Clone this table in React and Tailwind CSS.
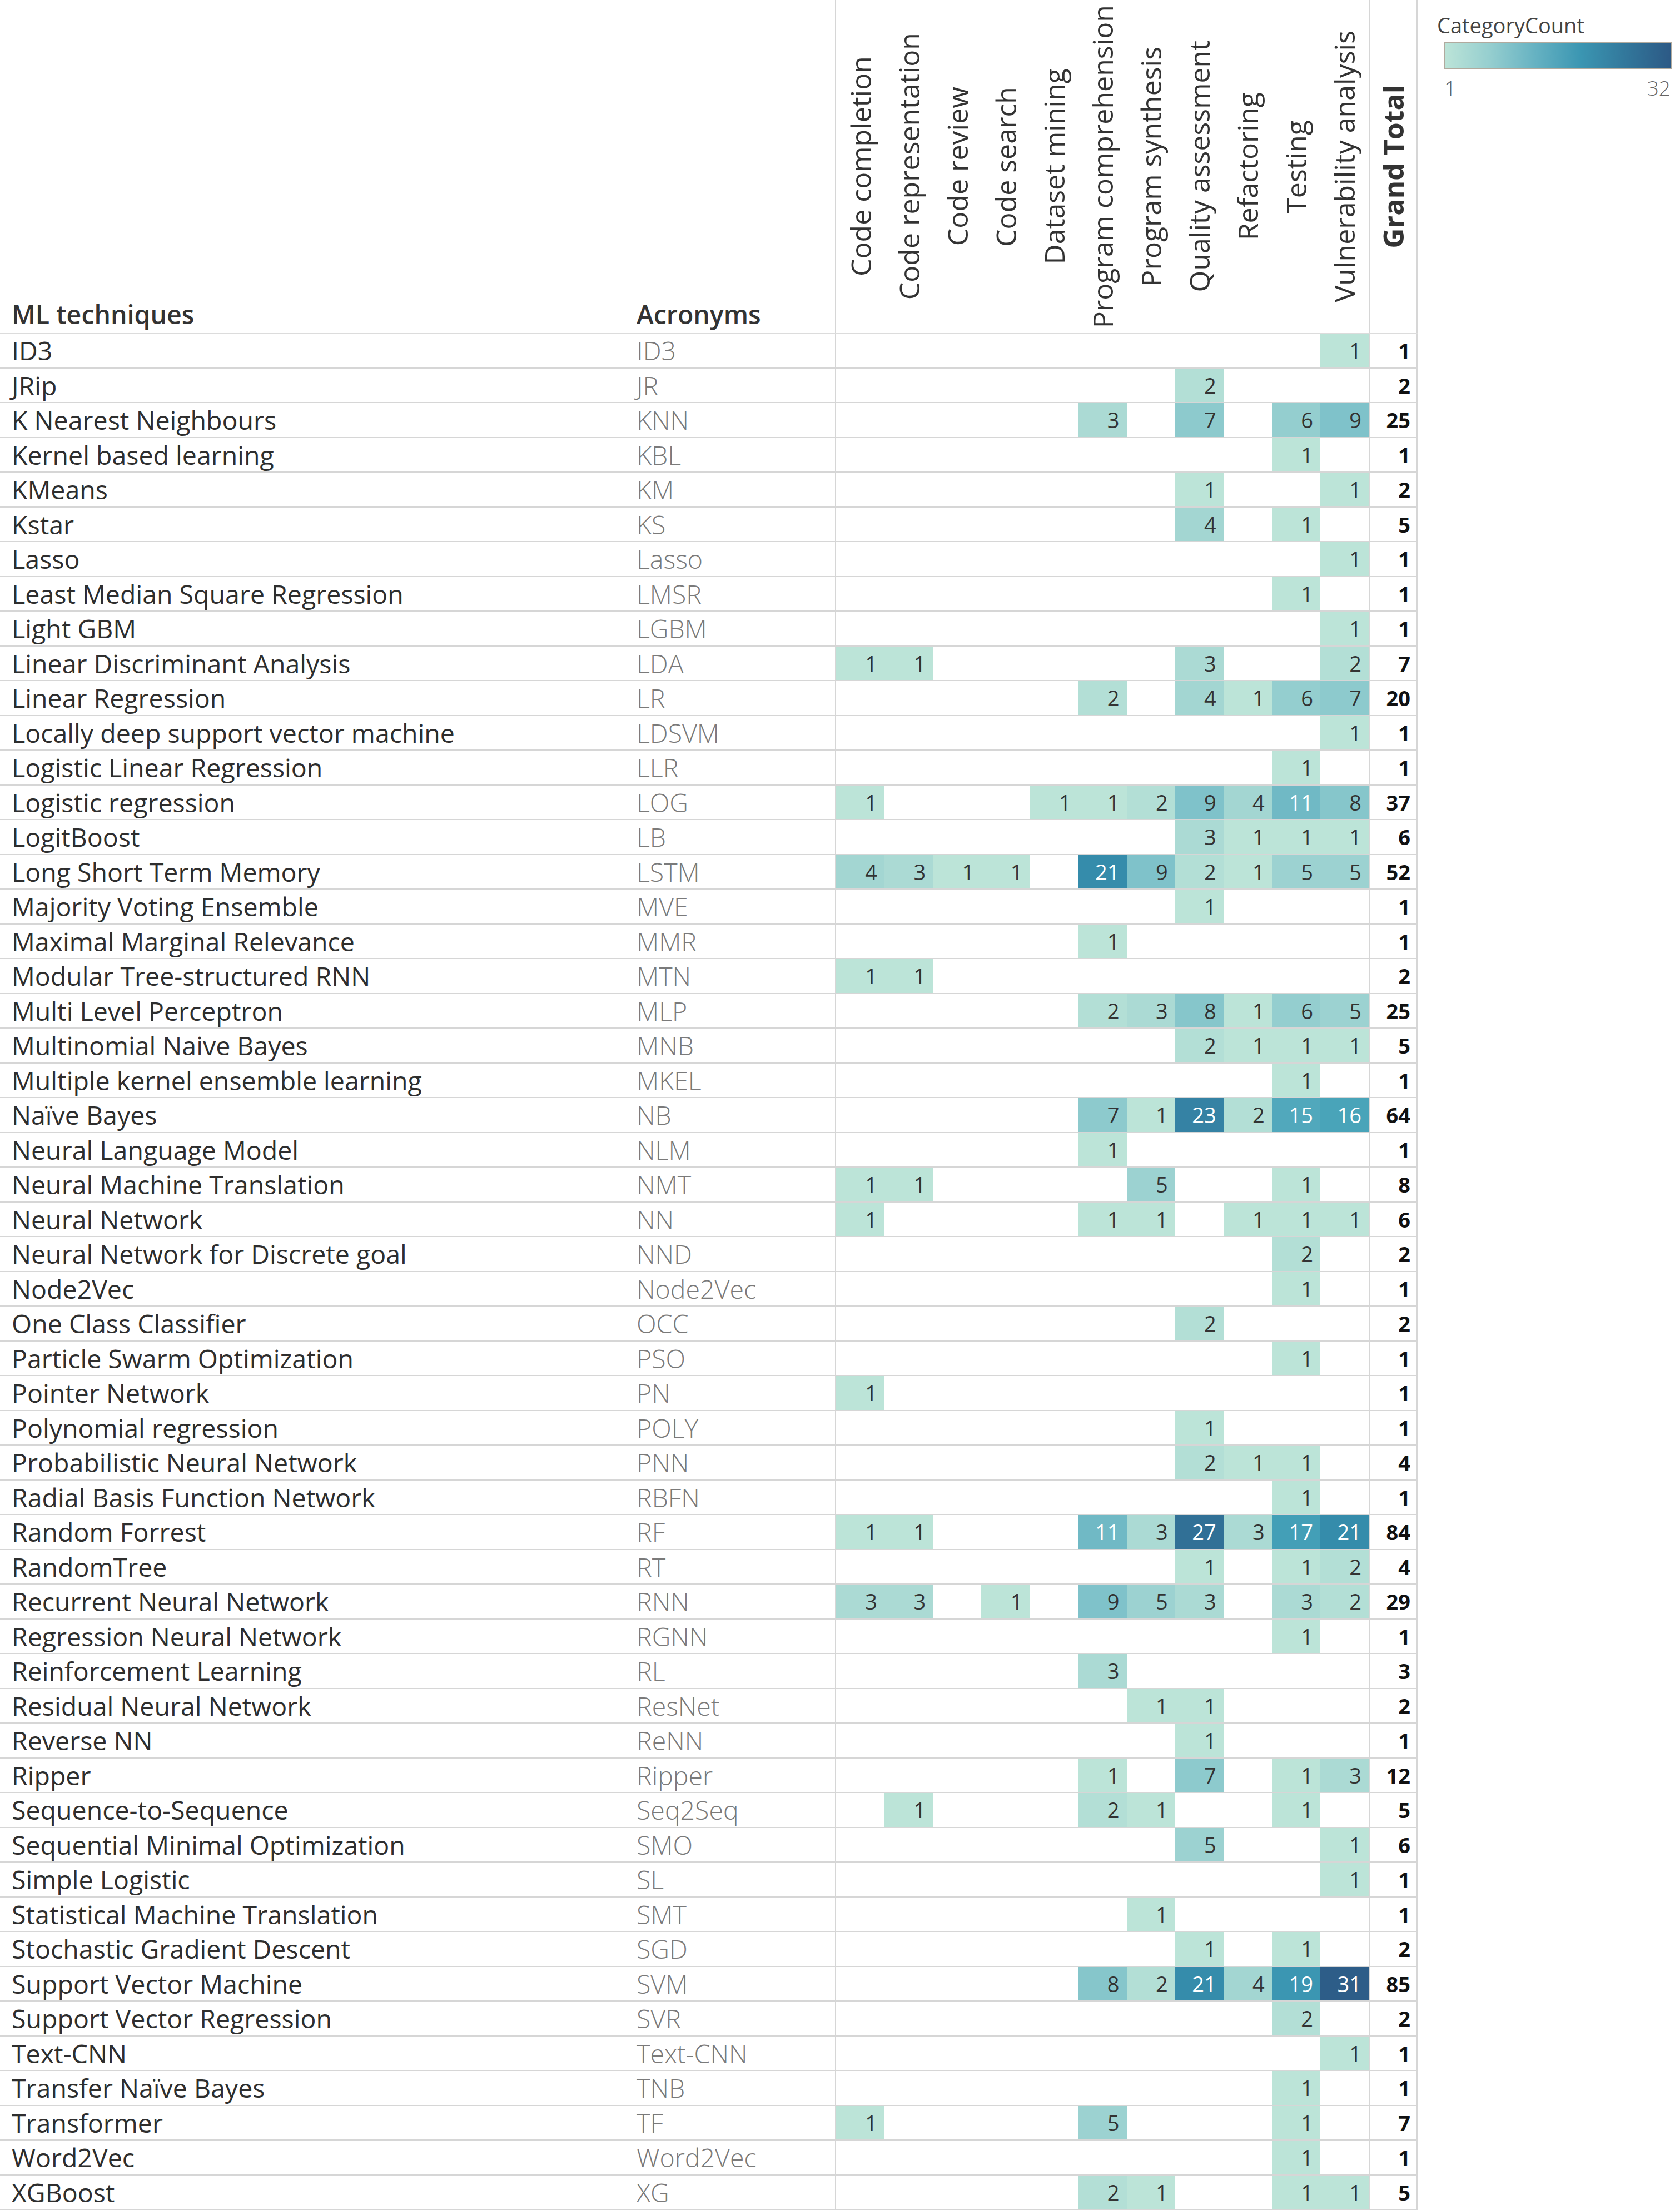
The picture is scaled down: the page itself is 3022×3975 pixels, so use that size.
import React from 'react'

const COLS = [
  'Code completion', 'Code representation', 'Code review', 'Code search', 'Dataset mining',
  'Program comprehension', 'Program synthesis', 'Quality assessment', 'Refactoring', 'Testing',
  'Vulnerability analysis',
]

// values per column: CC CR CRv CS DM PC PS QA RF TS VA
const ROWS = [
  ['ID3', 'ID3', [0, 0, 0, 0, 0, 0, 0, 0, 0, 0, 1]],
  ['JRip', 'JR', [0, 0, 0, 0, 0, 0, 0, 2, 0, 0, 0]],
  ['K Nearest Neighbours', 'KNN', [0, 0, 0, 0, 0, 3, 0, 7, 0, 6, 9]],
  ['Kernel based learning', 'KBL', [0, 0, 0, 0, 0, 0, 0, 0, 0, 1, 0]],
  ['KMeans', 'KM', [0, 0, 0, 0, 0, 0, 0, 1, 0, 0, 1]],
  ['Kstar', 'KS', [0, 0, 0, 0, 0, 0, 0, 4, 0, 1, 0]],
  ['Lasso', 'Lasso', [0, 0, 0, 0, 0, 0, 0, 0, 0, 0, 1]],
  ['Least Median Square Regression', 'LMSR', [0, 0, 0, 0, 0, 0, 0, 0, 0, 1, 0]],
  ['Light GBM', 'LGBM', [0, 0, 0, 0, 0, 0, 0, 0, 0, 0, 1]],
  ['Linear Discriminant Analysis', 'LDA', [1, 1, 0, 0, 0, 0, 0, 3, 0, 0, 2]],
  ['Linear Regression', 'LR', [0, 0, 0, 0, 0, 2, 0, 4, 1, 6, 7]],
  ['Locally deep support vector machine', 'LDSVM', [0, 0, 0, 0, 0, 0, 0, 0, 0, 0, 1]],
  ['Logistic Linear Regression', 'LLR', [0, 0, 0, 0, 0, 0, 0, 0, 0, 1, 0]],
  ['Logistic regression', 'LOG', [1, 0, 0, 0, 1, 1, 2, 9, 4, 11, 8]],
  ['LogitBoost', 'LB', [0, 0, 0, 0, 0, 0, 0, 3, 1, 1, 1]],
  ['Long Short Term Memory', 'LSTM', [4, 3, 1, 1, 0, 21, 9, 2, 1, 5, 5]],
  ['Majority Voting Ensemble', 'MVE', [0, 0, 0, 0, 0, 0, 0, 1, 0, 0, 0]],
  ['Maximal Marginal Relevance', 'MMR', [0, 0, 0, 0, 0, 1, 0, 0, 0, 0, 0]],
  ['Modular Tree-structured RNN', 'MTN', [1, 1, 0, 0, 0, 0, 0, 0, 0, 0, 0]],
  ['Multi Level Perceptron', 'MLP', [0, 0, 0, 0, 0, 2, 3, 8, 1, 6, 5]],
  ['Multinomial Naive Bayes', 'MNB', [0, 0, 0, 0, 0, 0, 0, 2, 1, 1, 1]],
  ['Multiple kernel ensemble learning', 'MKEL', [0, 0, 0, 0, 0, 0, 0, 0, 0, 1, 0]],
  ['Naïve Bayes', 'NB', [0, 0, 0, 0, 0, 7, 1, 23, 2, 15, 16]],
  ['Neural Language Model', 'NLM', [0, 0, 0, 0, 0, 1, 0, 0, 0, 0, 0]],
  ['Neural Machine Translation', 'NMT', [1, 1, 0, 0, 0, 0, 5, 0, 0, 1, 0]],
  ['Neural Network', 'NN', [1, 0, 0, 0, 0, 1, 1, 0, 1, 1, 1]],
  ['Neural Network for Discrete goal', 'NND', [0, 0, 0, 0, 0, 0, 0, 0, 0, 2, 0]],
  ['Node2Vec', 'Node2Vec', [0, 0, 0, 0, 0, 0, 0, 0, 0, 1, 0]],
  ['One Class Classifier', 'OCC', [0, 0, 0, 0, 0, 0, 0, 2, 0, 0, 0]],
  ['Particle Swarm Optimization', 'PSO', [0, 0, 0, 0, 0, 0, 0, 0, 0, 1, 0]],
  ['Pointer Network', 'PN', [1, 0, 0, 0, 0, 0, 0, 0, 0, 0, 0]],
  ['Polynomial regression', 'POLY', [0, 0, 0, 0, 0, 0, 0, 1, 0, 0, 0]],
  ['Probabilistic Neural Network', 'PNN', [0, 0, 0, 0, 0, 0, 0, 2, 1, 1, 0]],
  ['Radial Basis Function Network', 'RBFN', [0, 0, 0, 0, 0, 0, 0, 0, 0, 1, 0]],
  ['Random Forrest', 'RF', [1, 1, 0, 0, 0, 11, 3, 27, 3, 17, 21]],
  ['RandomTree', 'RT', [0, 0, 0, 0, 0, 0, 0, 1, 0, 1, 2]],
  ['Recurrent Neural Network', 'RNN', [3, 3, 0, 1, 0, 9, 5, 3, 0, 3, 2]],
  ['Regression Neural Network', 'RGNN', [0, 0, 0, 0, 0, 0, 0, 0, 0, 1, 0]],
  ['Reinforcement Learning', 'RL', [0, 0, 0, 0, 0, 3, 0, 0, 0, 0, 0]],
  ['Residual Neural Network', 'ResNet', [0, 0, 0, 0, 0, 0, 1, 1, 0, 0, 0]],
  ['Reverse NN', 'ReNN', [0, 0, 0, 0, 0, 0, 0, 1, 0, 0, 0]],
  ['Ripper', 'Ripper', [0, 0, 0, 0, 0, 1, 0, 7, 0, 1, 3]],
  ['Sequence-to-Sequence', 'Seq2Seq', [0, 1, 0, 0, 0, 2, 1, 0, 0, 1, 0]],
  ['Sequential Minimal Optimization', 'SMO', [0, 0, 0, 0, 0, 0, 0, 5, 0, 0, 1]],
  ['Simple Logistic', 'SL', [0, 0, 0, 0, 0, 0, 0, 0, 0, 0, 1]],
  ['Statistical Machine Translation', 'SMT', [0, 0, 0, 0, 0, 0, 1, 0, 0, 0, 0]],
  ['Stochastic Gradient Descent', 'SGD', [0, 0, 0, 0, 0, 0, 0, 1, 0, 1, 0]],
  ['Support Vector Machine', 'SVM', [0, 0, 0, 0, 0, 8, 2, 21, 4, 19, 31]],
  ['Support Vector Regression', 'SVR', [0, 0, 0, 0, 0, 0, 0, 0, 0, 2, 0]],
  ['Text-CNN', 'Text-CNN', [0, 0, 0, 0, 0, 0, 0, 0, 0, 0, 1]],
  ['Transfer Naïve Bayes', 'TNB', [0, 0, 0, 0, 0, 0, 0, 0, 0, 1, 0]],
  ['Transformer', 'TF', [1, 0, 0, 0, 0, 5, 0, 0, 0, 1, 0]],
  ['Word2Vec', 'Word2Vec', [0, 0, 0, 0, 0, 0, 0, 0, 0, 1, 0]],
  ['XGBoost', 'XG', [0, 0, 0, 0, 0, 2, 1, 0, 0, 1, 1]],
]

// tableau blue-teal
const PALETTE = [
  '#bce4d8', '#aedcd5', '#a1d5d2', '#95cecf', '#89c8cc', '#7ec1ca', '#72bac6', '#66b2c2',
  '#59acbe', '#4ba5ba', '#419eb6', '#3b96b2', '#358ead', '#3586a7', '#347ea1', '#32779b',
  '#316f96', '#2f6790', '#2d608a', '#2c5985',
]

function hexToRgb(h) {
  const n = parseInt(h.slice(1), 16)
  return [(n >> 16) & 255, (n >> 8) & 255, n & 255]
}

function cellColor(v) {
  const t = Math.min(1, Math.max(0, (v - 1) / 31)) * (PALETTE.length - 1)
  const i = Math.min(PALETTE.length - 2, Math.floor(t))
  const f = t - i
  const a = hexToRgb(PALETTE[i])
  const b = hexToRgb(PALETTE[i + 1])
  const c = a.map((x, k) => Math.round(x + (b[k] - x) * f))
  return `rgb(${c[0]},${c[1]},${c[2]})`
}

function Row({ name, acr, vals }) {
  const total = vals.reduce((s, v) => s + v, 0)
  return (
    <div className="flex h-[62.5px] border-b-2 border-[#d6d6d6]">
      <div className="w-[1125px] flex items-center pl-[21px] text-[46.5px] leading-none text-[#2e2e2e] whitespace-nowrap">
        {name}
      </div>
      <div className="w-[377px] flex items-center pl-[20px] text-[46.5px] leading-none font-light text-[#7a7a7a] whitespace-nowrap">
        {acr}
      </div>
      <div className="w-[960px] grid grid-cols-11 border-l-2 border-[#d6d6d6]">
        {vals.map((v, i) => (
          <div
            key={i}
            className="flex items-center justify-end pr-[13px] text-[38px] leading-none"
            style={v ? { backgroundColor: cellColor(v), color: (v - 1) / 31 > 0.3 ? '#ffffff' : '#333333' } : undefined}
          >
            {v ? v : ''}
          </div>
        ))}
      </div>
      <div className="w-[88px] flex items-center justify-end pr-[11px] border-l-2 border-r-2 border-[#d6d6d6] text-[38px] leading-none font-bold text-[#111]">
        {total}
      </div>
    </div>
  )
}

export default function App() {
  return (
    <div className="flex w-[3022px] h-[3975px] overflow-hidden bg-white font-['Open_Sans',sans-serif]">
      <div className="w-[2550px] shrink-0">
        <div className="flex h-[600px] border-b border-[#dcdcdc]">
          <div className="w-[1125px] flex items-end pl-[21px] pb-[11px] text-[46.5px] leading-none font-semibold text-[#333]">
            ML techniques
          </div>
          <div className="w-[377px] flex items-end pl-[20px] pb-[11px] text-[46.5px] leading-none font-semibold text-[#333]">
            Acronyms
          </div>
          <div className="w-[960px] grid grid-cols-11 border-l-2 border-[#d6d6d6]">
            {COLS.map(c => (
              <div key={c} className="flex items-center justify-center">
                <span className="[writing-mode:vertical-rl] rotate-180 whitespace-nowrap text-[50px] leading-none text-[#333]">
                  {c}
                </span>
              </div>
            ))}
          </div>
          <div className="w-[88px] flex items-center justify-center border-l-2 border-r-2 border-[#d6d6d6]">
            <span className="[writing-mode:vertical-rl] rotate-180 whitespace-nowrap text-[50px] leading-none font-bold text-[#333]">
              Grand Total
            </span>
          </div>
        </div>
        {ROWS.map(([name, acr, vals]) => (
          <Row key={name} name={name} acr={acr} vals={vals} />
        ))}
      </div>

      <div className="flex-1 pl-[35px] pt-[26px]">
        <div className="text-[38px] leading-none text-[#444]">CategoryCount</div>
        <div className="ml-[12px] mt-[12px] w-[411px] h-[48px] border-2 border-[#b1aa9e] bg-[linear-gradient(to_right,#bce4d8,#95cecf,#66b2c2,#3b96b2,#32779b,#2c5985)]" />
        <div className="ml-[13px] mt-[15px] w-[407px] flex justify-between text-[37px] leading-none font-light text-[#666]">
          <span>1</span>
          <span>32</span>
        </div>
      </div>
    </div>
  )
}
